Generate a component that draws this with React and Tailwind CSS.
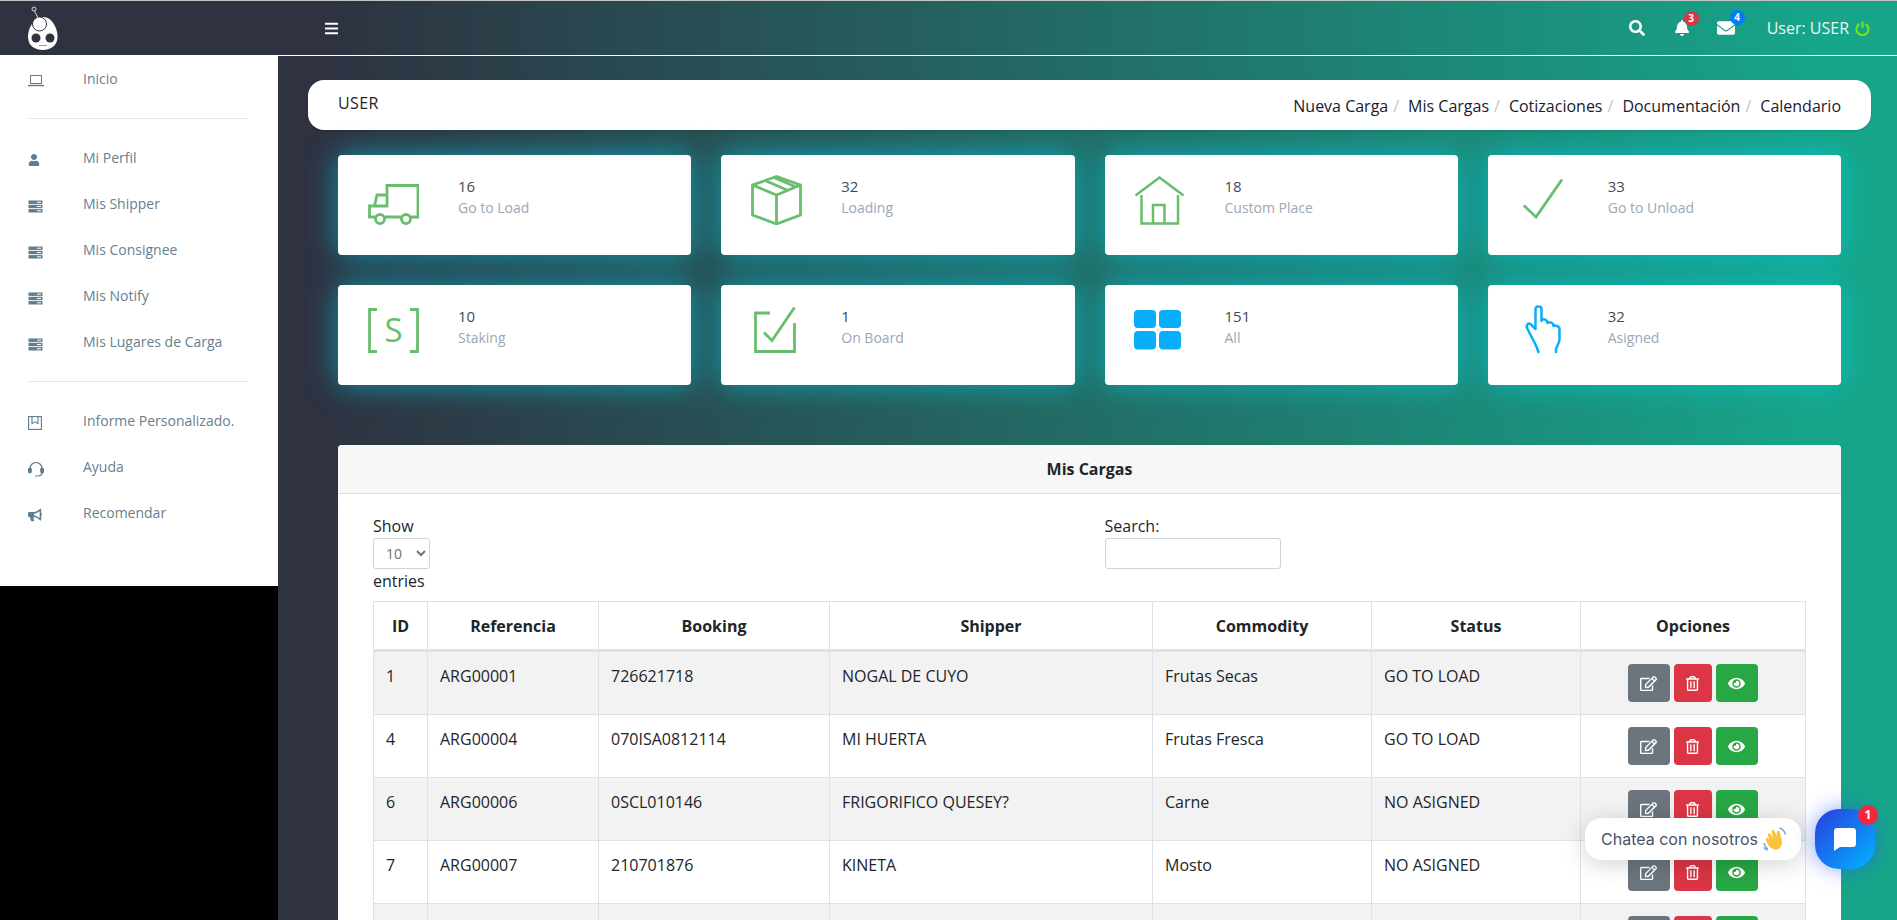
import { FaBars, FaBell, FaBullhorn, FaEnvelope, FaEye, FaRegEdit, FaRegTrashAlt, FaSearch, FaUser } from 'react-icons/fa'

const GREEN = '#69bd6f'
const BLUE = '#08aefa'

function ServerIcon() {
  return (
    <svg width="15" height="13" viewBox="0 0 15 13" className="shrink-0">
      <rect x="0.5" y="0.5" width="14" height="3.4" fill="#5f7d8d" />
      <rect x="0.5" y="4.8" width="14" height="3.4" fill="#5f7d8d" />
      <rect x="0.5" y="9.1" width="14" height="3.4" fill="#5f7d8d" />
      <path d="M9 2.2h4M9 6.5h4M9 10.8h4" stroke="#fff" strokeWidth="1" />
    </svg>
  )
}

function LaptopIcon() {
  return (
    <svg width="16" height="12" viewBox="0 0 16 12" fill="none" stroke="#5f7d8d" className="shrink-0">
      <rect x="2.5" y="0.5" width="11" height="8" />
      <path d="M0 10.5h16" strokeWidth="1.4" />
    </svg>
  )
}

function BookIcon() {
  return (
    <svg width="14" height="14" viewBox="0 0 14 14" fill="none" stroke="#5f7d8d" strokeWidth="1.1" className="shrink-0">
      <rect x="0.6" y="0.6" width="12.8" height="12.8" />
      <path d="M4 0.6v7l3-1.800 3 1.800v-7" />
    </svg>
  )
}

function HeadsetIcon() {
  return (
    <svg width="16" height="15" viewBox="0 0 16 15" fill="none" stroke="#5f7d8d" strokeWidth="1.2" className="shrink-0">
      <path d="M2 9V6.5a6 6 0 0 1 12 0V9" />
      <rect x="0.6" y="6" width="2.6" height="5" rx="1.2" fill="#5f7d8d" />
      <rect x="12.8" y="6" width="2.6" height="5" rx="1.2" fill="#5f7d8d" />
      <path d="M14 11c0 2-2 3-5 3H7" />
    </svg>
  )
}

function PowerIcon() {
  return (
    <svg width="15" height="15" viewBox="0 0 15 15" fill="none" stroke="#78e01e" strokeWidth="2.200" className="ml-[6px]">
      <path d="M4.300 3A6 6 0 1 0 10.700 3M7.500 0.500V7" />
    </svg>
  )
}

function Logo() {
  return (
    <svg width="30" height="44" viewBox="0 0 30 44">
      <path d="M15 11C24 11 29.500 22 29.500 31C29.500 39 23 44 15 44C6 44 0 39 0 31C0 22 6 11 15 11Z" fill="#fff" />
      <circle cx="11.500" cy="18" r="7" fill="#fff" stroke="#2e3241" strokeWidth="1" />
      <circle cx="6" cy="3" r="2" fill="none" stroke="#d9d9d9" strokeWidth="1" />
      <path d="M6.500 5L10 12" stroke="#d9d9d9" strokeWidth="1" />
      <circle cx="8" cy="32" r="4.500" fill="#2e3241" />
      <circle cx="22" cy="32" r="4.500" fill="#2e3241" />
      <path d="M11 39.500h8" stroke="#999" strokeWidth="1" />
    </svg>
  )
}

function TruckIcon() {
  return (
    <svg width="51" height="41" viewBox="0 0 51 41" fill="none" stroke={GREEN} strokeWidth="2.800">
      <path d="M19 11V1.500H50V33H43M33 33H17M7 33H1.500V22H19V11H9L6.500 22" />
      <circle cx="12" cy="35" r="4.500" />
      <circle cx="38" cy="35" r="4.500" />
    </svg>
  )
}

function BoxIcon() {
  return (
    <svg width="51" height="50" viewBox="0 0 51 50" fill="none" stroke={GREEN} strokeWidth="2.800">
      <path d="M25.500 1.500L49.500 10V40L25.500 49L1.500 40V10Z" />
      <path d="M1.500 10L25.500 20L49.500 10M25.500 20V49M14 5.500L36 15M23 2.500L45 12" />
    </svg>
  )
}

function HouseIcon() {
  return (
    <svg width="49" height="49" viewBox="0 0 49 49" fill="none" stroke={GREEN} strokeWidth="2.500">
      <path d="M0.500 19.500L24.500 1.500L48.500 19.500" />
      <path d="M6.500 19V47.500H43V19M18 47.500V29H29.500V47.500" />
    </svg>
  )
}

function CheckIcon() {
  return (
    <svg width="40" height="40" viewBox="0 0 40 40" fill="none" stroke={GREEN} strokeWidth="2.800">
      <path d="M0.800 26.500L13 38L39 0.500" />
    </svg>
  )
}

function StakingIcon() {
  return (
    <svg width="51" height="45" viewBox="0 0 51 45" fill="none">
      <path d="M9 1.500H1.500V43.500H9M42 1.500H49.500V43.500H42" stroke={GREEN} strokeWidth="2.800" />
      <text x="25.500" y="34" textAnchor="middle" fontSize="33" fontFamily="Open Sans, sans-serif" fill={GREEN}>S</text>
    </svg>
  )
}

function BoardIcon() {
  return (
    <svg width="42" height="46" viewBox="0 0 42 46" fill="none" stroke={GREEN} strokeWidth="2.800">
      <path d="M16 6H1.500V44.500H40.500V16" />
      <path d="M10 25.500L18 33.500L40.500 0.500" />
    </svg>
  )
}

function GridIcon() {
  return (
    <svg width="47" height="40" viewBox="0 0 47 40" fill={BLUE}>
      <rect x="0" y="0" width="22" height="18" rx="4" />
      <rect x="25" y="0" width="22" height="18" rx="4" />
      <rect x="0" y="21" width="22" height="18.500" rx="4" />
      <rect x="25" y="21" width="22" height="18.500" rx="4" />
    </svg>
  )
}

function HandIcon() {
  return (
    <svg width="37" height="50" viewBox="0 0 37 50" fill="none" stroke={BLUE} strokeWidth="2.500" strokeLinecap="round" strokeLinejoin="round">
      <path d="M13.500 47L11 40.500L2 23C1 20.500 3 17.500 5.500 19L10.500 24V4C10.500 0.500 16.500 0.500 16.500 4V16C18 13 22.500 14.500 22.500 18C24 16.500 28.500 17.500 28.500 21C30 20 34.500 21 34.500 24V34C34.500 38 32 41 31 44V47" />
    </svg>
  )
}

function WaveEmoji() {
  return (
    <svg width="24" height="24" viewBox="0 0 22 22">
      <path d="M4 15C1.500 11 3 9 4.500 10L6 12L4.500 7.500C4 5.500 6 5 7 6.500L9.500 10.500L8 4.500C7.500 2.500 10 2 10.500 4L13 9L12.500 5C12.500 3 15 3 15.500 5L17 11.500C18 15 17 18 14.500 20C11 22 6.500 20 4 15Z" fill="#f9c33c" />
      <path d="M17.500 2C19 3 20 4.500 20.500 6.500M15.500 1C16.500 1.200 17 1.500 17.500 2M1 15C1.500 17 2.500 18.500 4 20M3.500 21C2.500 20.500 1.500 19.800 1 19" fill="none" stroke="#5b9bd5" strokeWidth="1.200" strokeLinecap="round" />
    </svg>
  )
}

const stats = [
  { value: 16, label: 'Go to Load', icon: <TruckIcon />, pad: 'pl-[30px]', top: 'pt-[29px]' },
  { value: 32, label: 'Loading', icon: <BoxIcon />, pad: 'pl-[30px]', top: 'pt-[20px]' },
  { value: 18, label: 'Custom Place', icon: <HouseIcon />, pad: 'pl-[30px]', top: 'pt-[21px]' },
  { value: 33, label: 'Go to Unload', icon: <CheckIcon />, pad: 'pl-[35px]', top: 'pt-[24px]' },
  { value: 10, label: 'Staking', icon: <StakingIcon />, pad: 'pl-[30px]', top: 'pt-[23px]' },
  { value: 1, label: 'On Board', icon: <BoardIcon />, pad: 'pl-[33px]', top: 'pt-[22px]' },
  { value: 151, label: 'All', icon: <GridIcon />, pad: 'pl-[29px]', top: 'pt-[25px]' },
  { value: 32, label: 'Asigned', icon: <HandIcon />, pad: 'pl-[37px]', top: 'pt-[20px]' },
]

const rows = [
  ['1', 'ARG00001', '726621718', 'NOGAL DE CUYO', 'Frutas Secas', 'GO TO LOAD'],
  ['4', 'ARG00004', '070ISA0812114', 'MI HUERTA', 'Frutas Fresca', 'GO TO LOAD'],
  ['6', 'ARG00006', '0SCL010146', 'FRIGORIFICO QUESEY?', 'Carne', 'NO ASIGNED'],
  ['7', 'ARG00007', '210701876', 'KINETA', 'Mosto', 'NO ASIGNED'],
  ['', '', '', '', '', ''],
]

const columns = [
  ['ID', 'w-[54px]'],
  ['Referencia', 'w-[171px]'],
  ['Booking', 'w-[231px]'],
  ['Shipper', 'w-[323px]'],
  ['Commodity', 'w-[219px]'],
  ['Status', 'w-[209px]'],
  ['Opciones', 'w-[225px]'],
]

function SideItem({ icon, label }) {
  return (
    <a className="flex h-[46px] items-center pl-[28px] text-sm text-[#67808f]">
      <span className="flex w-[55px] translate-y-[2px]">{icon}</span>
      {label}
    </a>
  )
}

function StatCard({ stat }) {
  return (
    <div className="flex h-[100px] rounded bg-white shadow-[0_0_30px_rgba(0,210,235,0.62)]">
      <div className={`w-[120px] shrink-0 ${stat.pad} ${stat.top}`}>{stat.icon}</div>
      <div className="pt-[21px] text-sm leading-[21px]">
        <div className="text-[15px] text-[#3f4a55]">{stat.value}</div>
        <div className="text-[#9aa7b5]">{stat.label}</div>
      </div>
    </div>
  )
}

function Actions() {
  return (
    <div className="flex justify-center gap-1 pr-[1px] text-white">
      <button className="flex h-[38px] w-[42px] items-center justify-center rounded bg-[#6c757d] text-[17px]"><FaRegEdit /></button>
      <button className="flex h-[38px] w-[38px] items-center justify-center rounded bg-[#dc3545] text-[15px]"><FaRegTrashAlt /></button>
      <button className="flex h-[38px] w-[42px] items-center justify-center rounded bg-[#28a745] text-[17px]"><FaEye /></button>
    </div>
  )
}

export default function App() {
  return (
    <div className="relative h-[920px] overflow-hidden border-t border-[#c4c4c4] bg-[linear-gradient(90deg,#2e3241,#2e3241_17%,#17a589_96%)] font-['Open_Sans',sans-serif] text-[#212529]">
      <header className="box-content flex h-[54px] items-center border-b border-white text-white">
        <div className="flex w-[324px] pl-[28px]"><Logo /></div>
        <FaBars className="text-[15px]" />
        <div className="ml-auto flex items-center pr-[27px]">
          <FaSearch className="mr-[29px] text-[16px]" />
          <div className="relative mr-[27px]">
            <FaBell className="text-[16px]" />
            <span className="absolute -top-[9px] left-[10px] flex h-[15px] w-[15px] items-center justify-center rounded-full bg-[#dc3545] text-[10px] font-bold">3</span>
          </div>
          <div className="relative mr-[32px]">
            <FaEnvelope className="text-[18px]" />
            <span className="absolute -top-[9px] left-[13px] flex h-[15px] w-[15px] items-center justify-center rounded-full bg-[#007bff] text-[10px] font-bold">4</span>
          </div>
          <span className="text-[16px] text-[#eaf6f3]">User: USER</span>
          <PowerIcon />
        </div>
      </header>

      <div className="flex">
        <aside className="h-[864px] w-[278px] shrink-0 bg-black">
          <div className="h-[530px] bg-white">
            <SideItem icon={<LaptopIcon />} label="Inicio" />
            <div className="mx-[28px] my-[16px] w-[220px] border-t border-[#e5e5e5]" />
            <SideItem icon={<FaUser className="text-[12px] text-[#5f7d8d]" />} label="Mi Perfil" />
            <SideItem icon={<ServerIcon />} label="Mis Shipper" />
            <SideItem icon={<ServerIcon />} label="Mis Consignee" />
            <SideItem icon={<ServerIcon />} label="Mis Notify" />
            <SideItem icon={<ServerIcon />} label="Mis Lugares de Carga" />
            <div className="mx-[28px] my-[16px] w-[220px] border-t border-[#e5e5e5]" />
            <SideItem icon={<BookIcon />} label="Informe Personalizado." />
            <SideItem icon={<HeadsetIcon />} label="Ayuda" />
            <SideItem icon={<FaBullhorn className="text-[14px] text-[#5f7d8d]" />} label="Recomendar" />
          </div>
        </aside>

        <main className="min-w-0 flex-1 pl-[30px] pr-[26px] pt-[24px]">
          <div className="flex h-[50px] items-start justify-between rounded-[16px] bg-white pl-[30px] pr-[30px] shadow-sm">
            <span className="pt-[11px] tracking-[0.4px]">USER</span>
            <nav className="flex pt-[14px] text-[#1a1a2e]">
              {['Nueva Carga', 'Mis Cargas', 'Cotizaciones', 'Documentación', 'Calendario'].map((item, i) => (
                <span key={item} className="flex">
                  {i > 0 && <span className="pl-[5px] pr-[9px] text-[#c2c7cc]">/</span>}
                  {item}
                </span>
              ))}
            </nav>
          </div>

          <div className="px-[30px]">
            <div className="mt-[25px] grid grid-cols-4 gap-[30px]">
              {stats.map((stat) => <StatCard key={stat.label} stat={stat} />)}
            </div>

            <section className="mt-[60px] rounded bg-white">
              <div className="flex h-[49px] items-center justify-center rounded-t border-b border-[#dfdfdf] bg-[#f7f7f7] font-bold">Mis Cargas</div>
              <div className="px-[35px] pt-[20px]">
                <div className="grid grid-cols-2">
                  <div className="leading-[24px]">
                    <div>Show</div>
                    <select className="block h-[31px] w-[57px] rounded-[3px] border border-[#ced4da] pl-[8px] text-sm text-[#6c757d]">
                      <option>10</option>
                    </select>
                    <div>entries</div>
                  </div>
                  <div className="pl-[15px] leading-[24px]">
                    <div>Search:</div>
                    <input className="block h-[31px] w-[176px] rounded-[3px] border border-[#ced4da]" />
                  </div>
                </div>

                <table className="mt-[8px] w-[1432px] table-fixed border-collapse border border-[#dee2e6]">
                  <thead>
                    <tr className="h-[49px] border-b-[3px] border-[#dee2e6]">
                      {columns.map(([name, width]) => (
                        <th key={name} className={`${width} border-x border-[#dee2e6] text-center font-bold`}>{name}</th>
                      ))}
                    </tr>
                  </thead>
                  <tbody>
                    {rows.map((row, i) => (
                      <tr key={i} className={`h-[63px] border-b border-[#dee2e6] ${i % 2 === 0 ? 'bg-[#f2f2f2]' : 'bg-white'}`}>
                        {row.map((cell, j) => (
                          <td key={j} className="border-x border-[#dee2e6] px-[12px] py-[12px] align-top">{cell}</td>
                        ))}
                        <td className="border-x border-[#dee2e6] py-[12px] align-top"><Actions /></td>
                      </tr>
                    ))}
                  </tbody>
                </table>
              </div>
            </section>
          </div>
        </main>
      </div>

      <div className="absolute left-[1585px] top-[817px] flex h-[42px] w-[216px] items-center rounded-[16px] bg-white pl-[16px] font-['Inter',sans-serif] text-[16px] text-[#4a5168] shadow-[0_4px_24px_rgba(0,0,0,0.18)]">
        Chatea con nosotros
        <span className="ml-[5px]"><WaveEmoji /></span>
      </div>
      <div className="absolute left-[1815px] top-[808px] flex h-[60px] w-[60px] items-center justify-center rounded-[24px] bg-[linear-gradient(135deg,#2b3ce0,#00b4ff)] shadow-[0_0_20px_rgba(40,90,255,0.55)]">
        <svg width="22" height="23" viewBox="0 0 22 23" fill="#fff">
          <path d="M3 0H19C20.700 0 22 1.300 22 3V16C22 17.700 20.700 19 19 19H6L0 23V3C0 1.300 1.300 0 3 0Z" />
        </svg>
        <span className="absolute -right-[3px] -top-[4px] flex h-[20px] w-[20px] items-center justify-center rounded-full bg-[#f5263a] text-[12px] font-bold text-white">1</span>
      </div>
    </div>
  )
}
